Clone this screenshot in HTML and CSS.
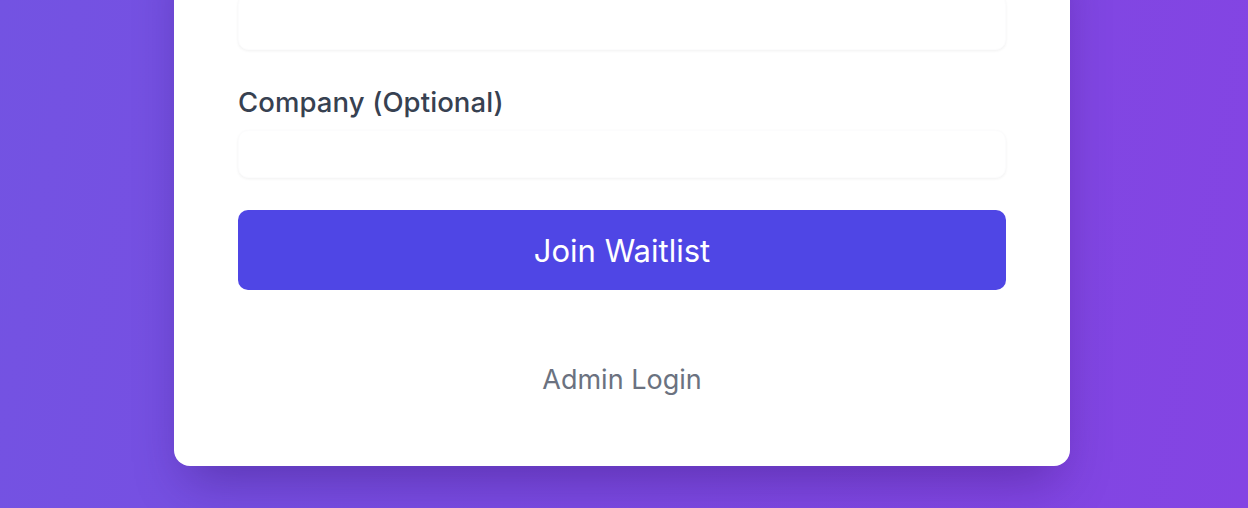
FILE: index.html
```html
<!DOCTYPE html>
<html lang="en">
<head>
<meta charset="utf-8">
<title>Join Waitlist</title>
<link rel="stylesheet" href="styles.css">
</head>
<body>
<main class="page">
  <form class="card">
    <div class="field">
      <input class="input" id="email" type="email" aria-label="Email">
    </div>
    <div class="field">
      <label class="label" for="company">Company (Optional)</label>
      <input class="input" id="company" type="text">
    </div>
    <button class="btn" type="button">Join Waitlist</button>
    <a class="admin" href="#">Admin Login</a>
  </form>
</main>
</body>
</html>
```

FILE: styles.css
```css
* { box-sizing: border-box; }
html, body { margin: 0; height: 100%; }
body {
  font-family: Inter, "Noto Sans", "Liberation Sans", sans-serif;
  background: linear-gradient(100deg, #7353e2 0%, #7b4ae2 50%, #8444e3 100%);
  overflow: hidden;
}
.page {
  display: flex;
  justify-content: center;
  padding-right: 4px;
}
.card {
  width: 896px;
  margin-top: -70px;
  background: #fff;
  border-radius: 16px;
  padding: 64px 64px 70px;
  display: flex;
  flex-direction: column;
  box-shadow: 0 25px 50px -12px rgba(40, 10, 90, 0.35);
}
.field {
  display: flex;
  flex-direction: column;
  gap: 12px;
  margin-bottom: 36px;
}
.field + .field { margin-bottom: 32px; }
.label {
  font-size: 27.5px;
  line-height: 32px;
  font-weight: 500;
  color: #374151;
  letter-spacing: 0.1px;
}
.input {
  height: 56px;
  border: 1px solid #fcfcfd;
  border-radius: 10px;
  box-shadow: 0 1px 3px rgba(0, 0, 0, 0.06);
  background: #fff;
  font: inherit;
}
.field + .field .input { height: 48px; }
.btn {
  height: 80px;
  border: none;
  border-radius: 10px;
  background: #4f46e5;
  color: #fff;
  font-family: inherit;
  font-size: 31px;
  font-weight: 400;
  cursor: pointer;
}
.admin {
  margin-top: 74px;
  text-align: center;
  font-size: 27px;
  line-height: 32px;
  color: #6b7280;
  text-decoration: none;
}
```
